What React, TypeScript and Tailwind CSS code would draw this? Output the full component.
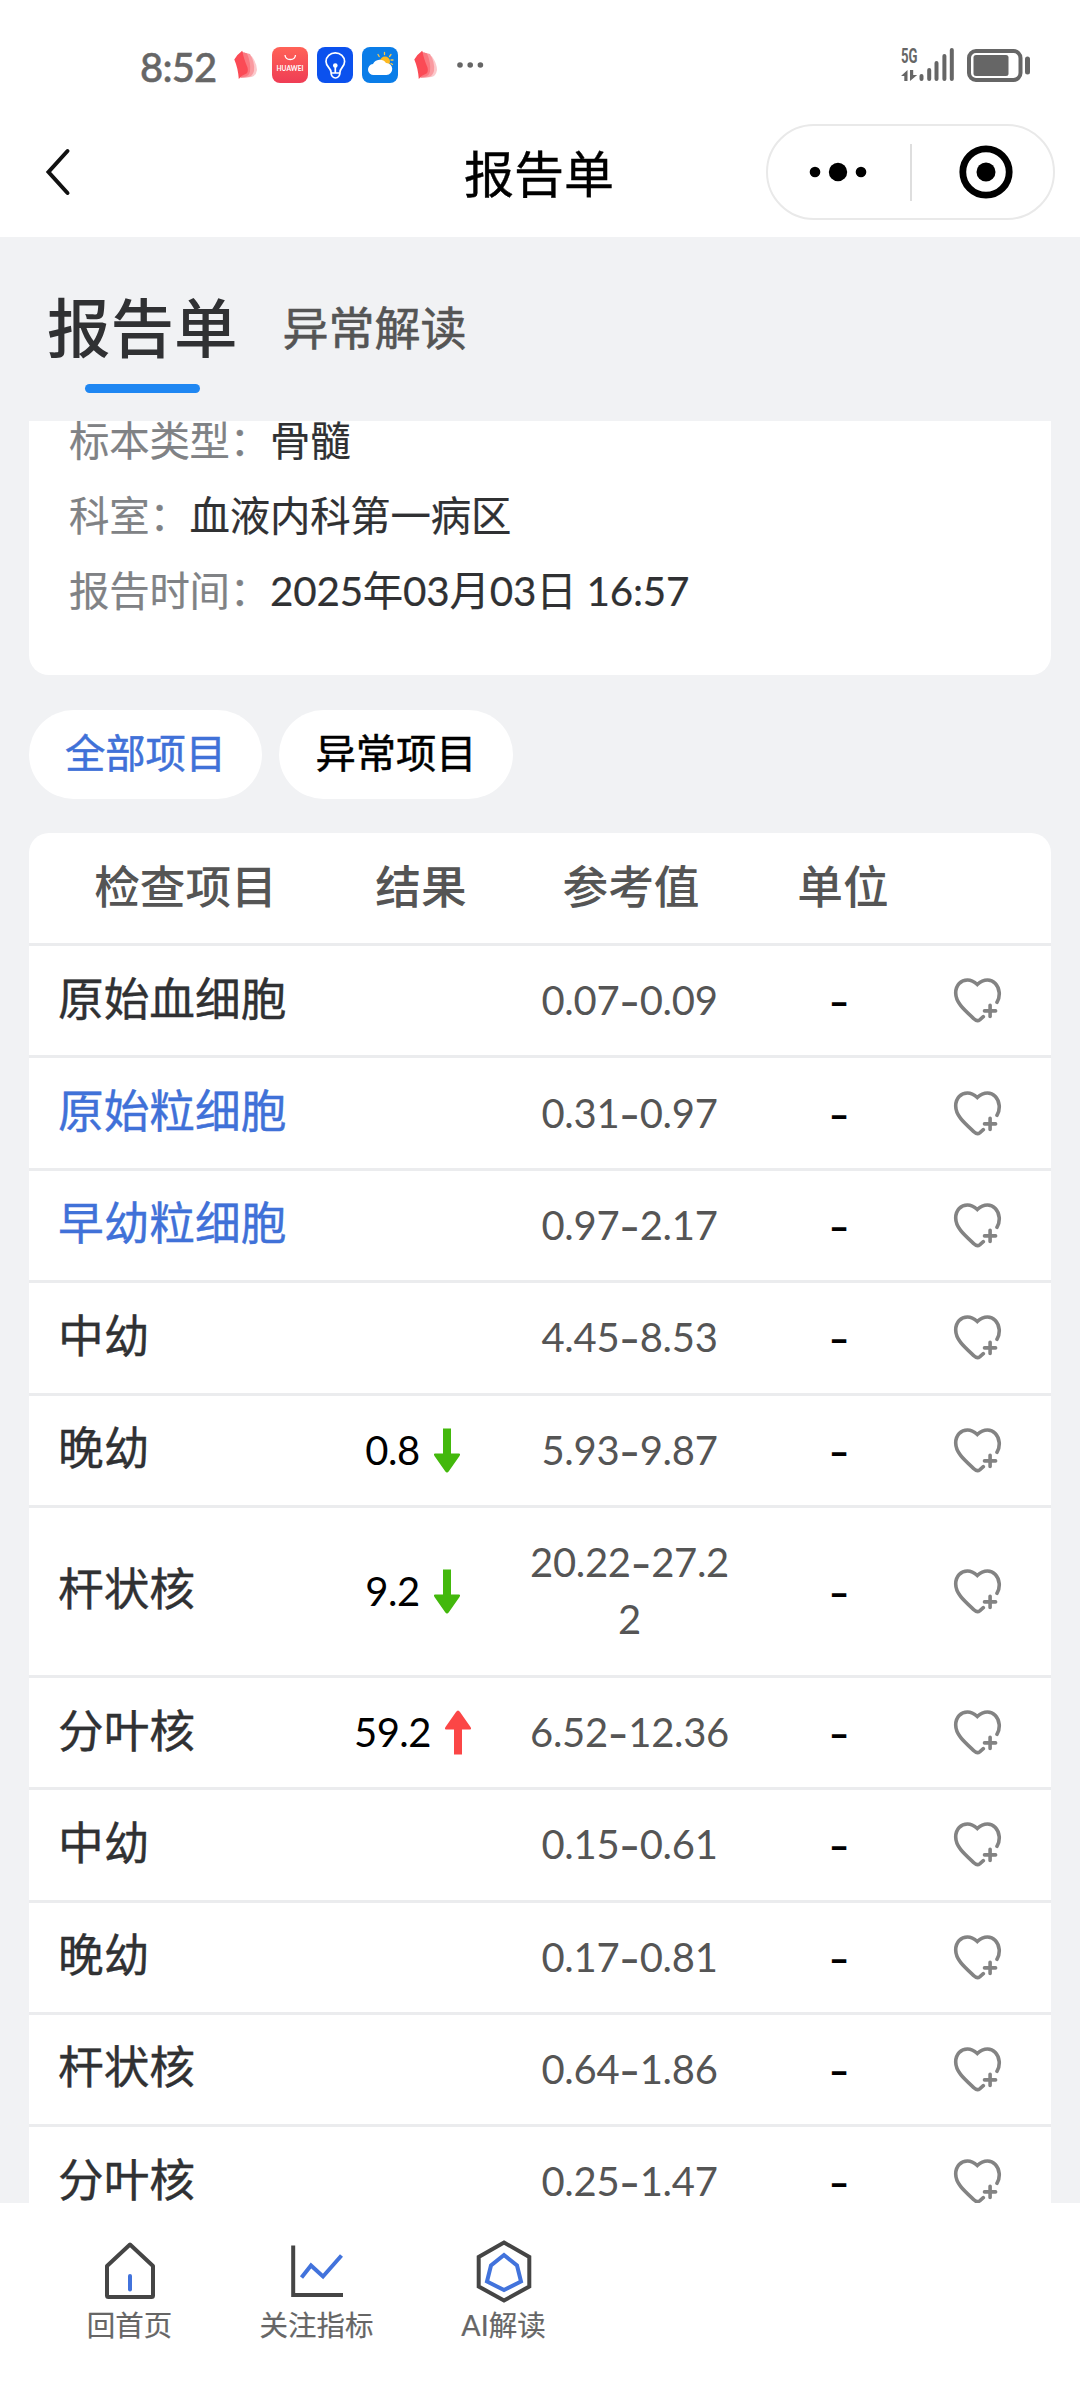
import clsx from "clsx";

type ReportItem = {
    name: string;
    result?: string;
    trend?: "up" | "down";
    range: string;
    linked?: boolean;
    height: string;
};

const items: ReportItem[] = [
    { name: "原始血细胞", range: "0.07-0.09", height: "h-[112.4px]" },
    { name: "原始粒细胞", range: "0.31-0.97", linked: true, height: "h-[112.4px]" },
    { name: "早幼粒细胞", range: "0.97-2.17", linked: true, height: "h-[112.4px]" },
    { name: "中幼", range: "4.45-8.53", height: "h-[112.4px]" },
    { name: "晚幼", result: "0.8", trend: "down", range: "5.93-9.87", height: "h-[112.4px]" },
    { name: "杆状核", result: "9.2", trend: "down", range: "20.22-27.22", height: "h-[170px]" },
    { name: "分叶核", result: "59.2", trend: "up", range: "6.52-12.36", height: "h-[112.3px]" },
    { name: "中幼", range: "0.15-0.61", height: "h-[112.3px]" },
    { name: "晚幼", range: "0.17-0.81", height: "h-[112.3px]" },
    { name: "杆状核", range: "0.64-1.86", height: "h-[112.3px]" },
    { name: "分叶核", range: "0.25-1.47", height: "h-[112.3px]" },
];

const details = [
    { label: "标本类型：", value: "骨髓" },
    { label: "科室：", value: "血液内科第一病区" },
    { label: "报告时间：", value: "2025年03月03日 16:57" },
];

function LeafIcon({ className }: { className?: string }) {
    return (
        <svg viewBox="0 0 24 30" className={clsx("h-[30px] w-6", className)}>
            <path d="M13 5l5 1.500q5 7 5 13.500-1 6-5.500 7l-9 1z" fill="#fcc9cc" />
            <path d="M10 2.500l6 1.500q5 8 4 17-1.500 5-5 6l-8 1z" fill="#fa9aa0" />
            <path d="M7 1.500l6 2q4 9 3 18-1 4-4 5l-6 1z" fill="#fa7880" />
            <path d="M0.300 9.500Q3.500 4 8.300 0.700 9.500 8 13.500 17.500q1 4-1 6Q8 25 4.800 29 4 18 0.300 9.500z" fill="#fb4a55" />
        </svg>
    );
}

function StatusBar() {
    return (
        <div className="flex h-[124px] items-center pt-[6px] pr-[50px] pl-[140px] text-[#666]">
            <span className="w-[94px] pt-[3px] text-[40px] leading-[50px] tracking-[-0.8px] font-medium [-webkit-text-stroke:0.5px]">8:52</span>
            <LeafIcon />
            <svg viewBox="0 0 36 36" className="ml-[14px] size-9">
                <defs>
                    <linearGradient id="store" x1="0" y1="0" x2="0" y2="1">
                        <stop offset="0" stopColor="#ff6257" />
                        <stop offset="1" stopColor="#ef3d55" />
                    </linearGradient>
                </defs>
                <rect width="36" height="36" rx="8" fill="url(#store)" />
                <path d="M13 8c.5 6 10 6 10.500 0" fill="none" stroke="#fff" strokeWidth="1.300" />
                <text x="18" y="23.500" textAnchor="middle" fill="#fff" fontSize="6.600" fontWeight="700" textLength="27">HUAWEI</text>
            </svg>
            <svg viewBox="0 0 36 36" className="ml-[9px] size-9">
                <rect width="36" height="36" rx="8" fill="#0b51ee" />
                <g fill="none" stroke="#fff" strokeWidth="1.700" strokeLinecap="round">
                    <path d="M14 25c0-4-5-5-5-10.500a9.300 8.700 0 0 1 18.600 0C27.600 20 23 21 23 25c0 8-9 8-9 0z" />
                    <path d="M14.500 26h8M18.300 20v6" />
                    <circle cx="18.300" cy="18.500" r="1.500" fill="#fff" />
                </g>
            </svg>
            <svg viewBox="0 0 36 36" className="ml-[9px] size-9">
                <rect width="36" height="36" rx="8" fill="#0a7de8" />
                <path d="M22.500 5.500v2M16 7.500l1.200 2M29 7.500l-1.500 2M31 13h-2M30.500 17.500l-1.500-1" stroke="#f8c84a" strokeWidth="1.300" strokeLinecap="round" />
                <circle cx="23" cy="14.500" r="5" fill="#fdb921" />
                <path d="M12 28a5.500 5.500 0 0 1-1-11 7.500 7.500 0 0 1 13-1 6 6 0 0 1 .5 12z" fill="#fff" />
            </svg>
            <LeafIcon className="ml-[16px]" />
            <svg viewBox="0 0 28 8" className="ml-[18px] h-2 w-7" fill="#666">
                <circle cx="4" cy="4" r="2.800" />
                <circle cx="14.200" cy="4" r="2.800" />
                <circle cx="24.400" cy="4" r="2.800" />
            </svg>
            <svg viewBox="0 0 130 36" className="ml-auto h-9 w-[130px] overflow-visible" fill="#666">
                <text x="1" y="16" fontSize="20" fontWeight="700" fontFamily="Roboto" textLength="16.500" lengthAdjust="spacingAndGlyphs">5G</text>
                <path d="M7.500 34h-3.200v-5H1l6.500-6zM10 23h3.200v5h4l-7.200 6z" />
                <g stroke="#666" strokeWidth="4" strokeLinecap="round">
                    <path d="M21.500 29v3M29.200 23v9M36.500 16v16M44.400 9v23M51.800 3v29" />
                </g>
                <rect x="69" y="4" width="51.500" height="29" rx="7" fill="none" stroke="#666" strokeWidth="4" />
                <rect x="73.500" y="8" width="35" height="21" rx="2.500" />
                <rect x="125" y="9.500" width="5" height="18" rx="2.500" />
            </svg>
        </div>
    );
}

function TitleBar() {
    return (
        <div className="grid h-[113px] grid-cols-[390px_300px_1fr] items-center pb-[17px]">
            <svg viewBox="0 0 26 48" className="ml-[45px] h-12 w-[26px]" fill="none" stroke="#111" strokeWidth="4" strokeLinecap="round">
                <path d="M22.500 3L3.500 24l19 21" />
            </svg>
            <h1 className="pt-[3px] pr-[2px] text-center text-[50px] leading-[60px] text-black [-webkit-text-stroke:0.4px]">报告单</h1>
            <div className="mr-[25px] ml-auto flex h-24 w-[289px] items-center rounded-full border-2 border-[#e9e9e9]">
                <svg viewBox="0 0 58 20" className="ml-[41px] h-5 w-[58px]">
                    <circle cx="6" cy="10" r="5.300" />
                    <circle cx="29" cy="10" r="9.200" />
                    <circle cx="52" cy="10" r="5.300" />
                </svg>
                <div className="ml-[43px] h-[57px] w-[2px] bg-[#dedede]" />
                <svg viewBox="0 0 54 54" className="ml-[47px] size-[54px]">
                    <circle cx="27" cy="27" r="23.200" fill="none" stroke="#000" strokeWidth="6.800" />
                    <circle cx="27" cy="27" r="9.500" />
                </svg>
            </div>
        </div>
    );
}

function TrendArrow({ trend }: { trend: "up" | "down" }) {
    return (
        <svg
            viewBox="0 0 28 45"
            className={clsx("h-[45px] w-7", trend === "up" ? "text-[#fb4646]" : "rotate-180 text-[#43b80c]")}
            fill="currentColor"
        >
            <path d="M14 0.500Q15 0.500 16 2L26.500 17Q27.800 19.500 26 19.500H18V44.500H10V19.500H2Q0.200 19.500 1.500 17L12 2Q13 .5 14 .5z" />
        </svg>
    );
}

function HeartPlus() {
    return (
        <svg viewBox="0 0 49 47" className="h-[47px] w-[49px]" fill="none" stroke="#838383" strokeWidth="3.600" strokeLinecap="round">
            <path d="M44 25.300C45.700 22.500 46.500 19.500 46.200 15.500 45.500 8 40.500 3 34.500 3 30.500 3 27 5 24.300 7.500 21.500 5 18.500 3 14.500 3 8 3 2.700 8 2.700 16 2.700 26 12 33.500 21.500 42.300 23.300 44 25.300 44 27 42.600L30.300 39.700" />
            <path d="M31.500 33.900H42.600M37.100 28.300V39.500" />
        </svg>
    );
}

function Dash() {
    return <span className="align-[-3px] font-[Inter] text-[45px] leading-none">-</span>;
}

function RangeText({ value }: { value: string }) {
    const [low, high] = value.split("-");
    return (
        <>
            {low}
            <Dash />
            {high}
        </>
    );
}

function ReportRow({ item }: { item: ReportItem }) {
    return (
        <div
            className={clsx(
                "grid shrink-0 grid-cols-[281px_206px_225px_196px_81px] items-center border-b-[3px] border-[#ebecee]",
                item.height,
            )}
        >
            <span
                className={clsx(
                    "pb-[5px] pl-[29px] text-[45.7px] leading-[57px] [-webkit-text-stroke:0.4px]",
                    item.linked ? "text-[#4071d8]" : "text-[#303133]",
                )}
            >
                {item.name}
            </span>
            <span className="flex items-center justify-center gap-[13px] text-[40px] leading-[57px] tracking-[-0.5px] text-black">
                {item.result}
                {item.trend && <TrendArrow trend={item.trend} />}
            </span>
            <span className="pr-[7px] pl-[9px] text-center text-[40px] leading-[57px] tracking-[-0.3px] break-all text-[#555]">
                <RangeText value={item.range} />
            </span>
            <span className="text-center text-[40px] leading-[57px] text-black">
                <Dash />
            </span>
            <span className="flex justify-center">
                <HeartPlus />
            </span>
        </div>
    );
}

function ReportTable() {
    return (
        <section className="mx-[29px] mt-[34px] flex min-h-0 flex-1 flex-col overflow-hidden rounded-t-[20px] bg-white">
            <div className="grid h-[113px] shrink-0 grid-cols-[313px_158px_262px_162px] items-center border-b-[3px] border-[#ebecee] pb-[4px] text-center text-[45.7px] leading-[57px] font-medium text-[#555]">
                <span>检查项目</span>
                <span>结果</span>
                <span>参考值</span>
                <span>单位</span>
            </div>
            {items.map((item, index) => (
                <ReportRow key={index} item={item} />
            ))}
        </section>
    );
}

function BottomNav() {
    return (
        <nav className="flex h-[197px] shrink-0 bg-white pt-[35px] pl-9 text-[28.5px] leading-[36px] text-[#666] [-webkit-text-stroke:0.2px]">
            <div className="flex w-[187px] flex-col items-center">
                <svg viewBox="0 0 56 66" className="h-[66px] w-14" fill="none" strokeWidth="4" strokeLinejoin="round" strokeLinecap="round">
                    <path d="M28 6.500L51 28V57.500Q51 59 49.500 59H6.500Q5 59 5 57.500V28z" stroke="#454545" />
                    <path d="M28 38V51.500" stroke="#4273dc" />
                </svg>
                <span className="mt-[3px]">回首页</span>
            </div>
            <div className="flex w-[187px] flex-col items-center">
                <svg viewBox="0 0 56 66" className="h-[66px] w-14" fill="none" strokeWidth="4">
                    <path d="M4.200 7.500V57H54" stroke="#454545" />
                    <path d="M12.500 39.500L22 27.500 34 38.500 52.500 17.500" stroke="#4273dc" />
                </svg>
                <span className="mt-[3px]">关注指标</span>
            </div>
            <div className="flex w-[187px] flex-col items-center">
                <svg viewBox="0 0 56 66" className="h-[66px] w-14" fill="none" strokeWidth="4">
                    <path d="M28 4.500L53.300 19V48.500L28 62.500 2.700 48.500V19z" stroke="#454545" />
                    <path d="M28 17L41 27.500 45 43.500 28 52 11 43.500 15 27.500z" stroke="#4273dc" />
                </svg>
                <span className="mt-[3px]">AI解读</span>
            </div>
        </nav>
    );
}

export default function App() {
    return (
        <div className="flex h-[2400px] w-[1080px] flex-col overflow-hidden bg-[#f1f2f4] font-[Lato,'Noto_Sans_CJK_SC',sans-serif]">
            <header className="shrink-0 bg-white">
                <StatusBar />
                <TitleBar />
            </header>

            <div className="flex h-[184px] shrink-0 items-start pt-[56px] pl-[47px]">
                <div className="flex flex-col items-center">
                    <span className="text-[63.5px] leading-[70px] font-medium text-[#303133]">报告单</span>
                    <span className="mt-[21px] h-[9px] w-[115px] rounded-full bg-[#1f87f2]" />
                </div>
                <span className="ml-[45px] text-[46px] leading-[70px] text-[#555] [-webkit-text-stroke:0.6px]">异常解读</span>
            </div>

            <section className="mx-[29px] flex h-[254px] shrink-0 flex-col gap-[35px] rounded-b-[20px] bg-white px-10">
                {details.map((detail) => (
                    <p key={detail.label} className="text-[40.4px] leading-[40px] tracking-[-0.2px] text-[#303133] [-webkit-text-stroke:0.2px]">
                        <span className="text-[#808285]">{detail.label}</span>
                        {detail.value}
                    </p>
                ))}
            </section>

            <div className="mt-[35px] ml-[29px] flex shrink-0 gap-[17px] text-[40.3px] leading-[84px] [-webkit-text-stroke:0.5px]">
                <button className="h-[89px] w-[233px] rounded-full bg-white pb-[4px] text-[#4071d8]">全部项目</button>
                <button className="h-[89px] w-[234px] rounded-full bg-white pb-[4px] text-black">异常项目</button>
            </div>

            <ReportTable />
            <BottomNav />
        </div>
    );
}
